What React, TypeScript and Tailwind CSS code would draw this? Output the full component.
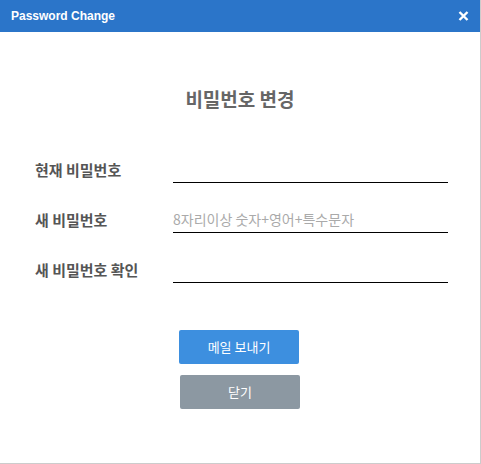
import { useState } from "react";

const KR = "font-['Malgun_Gothic','Noto_Sans_CJK_KR',sans-serif]";

const fields = [
  { label: "현재 비밀번호", placeholder: "" },
  { label: "새 비밀번호", placeholder: "8자리이상 숫자+영어+특수문자" },
  { label: "새 비밀번호 확인", placeholder: "" },
];

const App = () => {
  const [values, setValues] = useState(["", "", ""]);

  return (
    <div className="w-[481px] h-[464px] bg-white border-r border-b border-[#cccccc] flex flex-col">
      {/* Header */}
      <div className="h-8 bg-[#2b75c9] flex items-center justify-between pl-[11px] pr-[11px] shrink-0">
        <span className="text-white text-[12px] font-bold font-['Liberation_Sans',Arial,sans-serif]">
          Password Change
        </span>
        <button type="button" aria-label="close" className="w-[11px] h-[10px] flex items-center justify-center">
          <svg width="11" height="10" viewBox="0 0 11 10">
            <path d="M1.5 1 L9.5 9 M9.5 1 L1.5 9" stroke="white" strokeWidth="2.4" strokeLinecap="butt" />
          </svg>
        </button>
      </div>

      {/* Body */}
      <div className={"flex flex-col " + KR}>
        <h1 className="mt-[53px] text-center text-[19px] leading-[28px] font-bold text-[#666666]">
          비밀번호 변경
        </h1>

        <div className="mt-[43px] flex flex-col gap-[23px] pl-[35px] pr-[32px]">
          {fields.map((f, i) => (
            <div key={f.label} className="flex items-end">
              <label className="w-[138px] shrink-0 text-[15px] leading-[20px] font-bold text-[#555555] pb-[3px]">
                {f.label}
              </label>
              <input
                type="password"
                value={values[i]}
                placeholder={f.placeholder}
                onChange={(e) => {
                  const next = [...values];
                  next[i] = e.target.value;
                  setValues(next);
                }}
                className="flex-1 h-[27px] bg-transparent border-0 border-b border-black outline-none text-[14px] text-[#333] placeholder:text-[#aaaaaa] px-0"
              />
            </div>
          ))}
        </div>

        <div className="mt-[47px] flex flex-col items-center gap-[11px]">
          <button type="button" className="w-[120px] h-[34px] rounded-[2px] bg-[#3d8fdf] text-white text-[13px] ml-[-2px]">
            메일 보내기
          </button>
          <button type="button" className="w-[120px] h-[34px] rounded-[2px] bg-[#8c98a2] text-white text-[13px]">
            닫기
          </button>
        </div>
      </div>
    </div>
  );
};

export default App;
